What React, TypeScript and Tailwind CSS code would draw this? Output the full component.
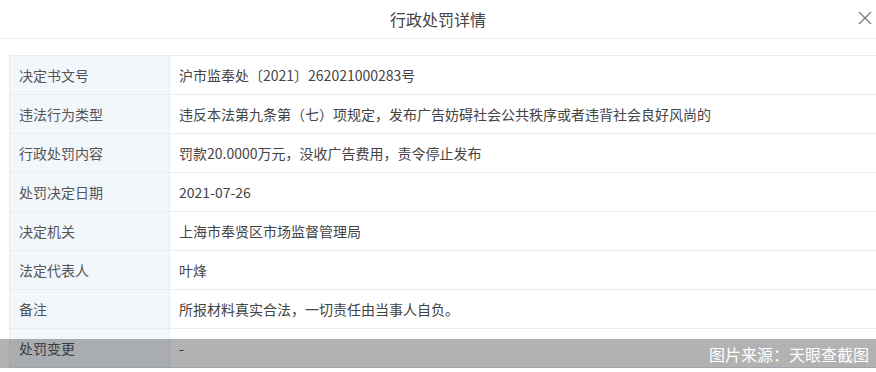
const rows = [
  { label: "决定书文号", value: "沪市监奉处〔2021〕262021000283号" },
  { label: "违法行为类型", value: "违反本法第九条第（七）项规定，发布广告妨碍社会公共秩序或者违背社会良好风尚的" },
  { label: "行政处罚内容", value: "罚款20.0000万元，没收广告费用，责令停止发布" },
  { label: "处罚决定日期", value: "2021-07-26" },
  { label: "决定机关", value: "上海市奉贤区市场监督管理局" },
  { label: "法定代表人", value: "叶烽" },
  { label: "备注", value: "所报材料真实合法，一切责任由当事人自负。" },
  { label: "处罚变更", value: "-" },
];

export default function App() {
  return (
    <div
      className="relative w-[876px] h-[372px] overflow-hidden bg-white text-[#333]"
      style={{ fontFamily: '"Noto Sans CJK SC", "Noto Sans", sans-serif' }}
    >
      {/* Header */}
      <div className="relative h-[39px] border-b border-[#eeeeee] flex items-center justify-center">
        <span className="text-[16px] text-[#444]">行政处罚详情</span>
        <button className="absolute left-[858px] top-[11px]" aria-label="close">
          <svg width="14" height="14" viewBox="0 0 14 14">
            <path d="M1 1L13 13M13 1L1 13" stroke="#777" strokeWidth="1.2" fill="none" />
          </svg>
        </button>
      </div>

      {/* Table */}
      <div className="mt-4 ml-[9px] border-t border-l border-[#e3edf6]">
        {rows.map((r) => (
          <div key={r.label} className="flex h-[39px] border-b border-[#e3edf6]">
            <div className="w-[160px] shrink-0 bg-[#f2f7fc] border-r border-[#e3edf6] flex items-center pl-[9px] text-[14px] text-[#555]">
              {r.label}
            </div>
            <div className="flex-1 flex items-center pl-[9px] text-[14px] text-[#444]">
              {r.value}
            </div>
          </div>
        ))}
      </div>

      {/* Watermark */}
      <div className="absolute left-0 right-0 top-[339px] h-[29px] bg-black/30 flex items-center justify-end pr-[7px]">
        <span className="text-[16px] text-white">图片来源：天眼查截图</span>
      </div>
    </div>
  );
}
